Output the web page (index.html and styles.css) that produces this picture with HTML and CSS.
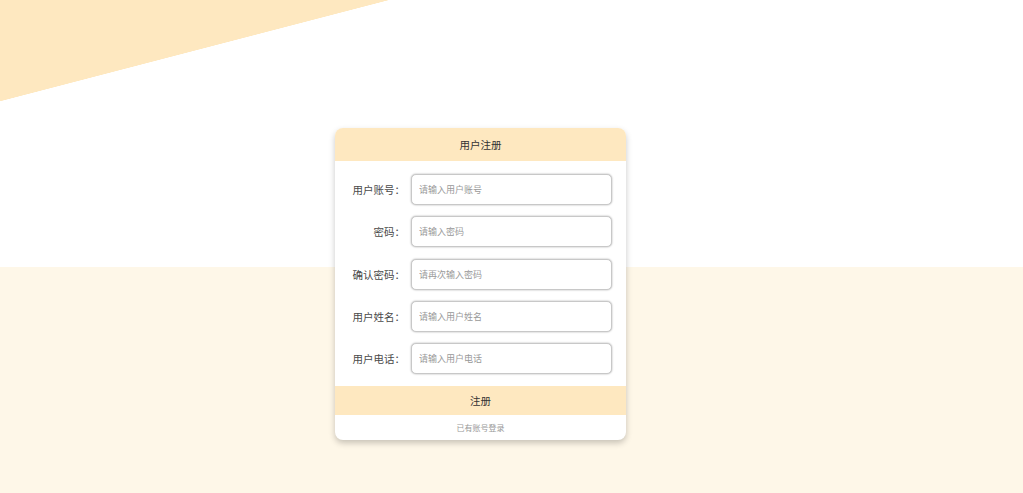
FILE: index.html
```html
<!DOCTYPE html>
<html lang="zh">
<head>
<meta charset="utf-8">
<title>用户注册</title>
<link rel="stylesheet" href="styles.css">
</head>
<body>
<div class="page">
  <div class="card">
    <div class="card-header">用户注册</div>
    <form class="form">
      <div class="row"><label class="label">用户账号：</label><input class="input" type="text" placeholder="请输入用户账号"></div>
      <div class="row"><label class="label">密码：</label><input class="input" type="password" placeholder="请输入密码"></div>
      <div class="row"><label class="label">确认密码：</label><input class="input" type="password" placeholder="请再次输入密码"></div>
      <div class="row"><label class="label">用户姓名：</label><input class="input" type="text" placeholder="请输入用户姓名"></div>
      <div class="row"><label class="label">用户电话：</label><input class="input" type="text" placeholder="请输入用户电话"></div>
    </form>
    <div class="submit">注册</div>
    <div class="login-link">已有账号登录</div>
  </div>
</div>
</body>
</html>
```
FILE: styles.css
```css
html, body {
  margin: 0;
  padding: 0;
}
body {
  width: 1023px;
  height: 493px;
  overflow: hidden;
  font-family: "Noto Sans CJK SC", "Noto Sans", sans-serif;
  color: #444;
  background:
    linear-gradient(to bottom right, #fee8c0 50%, rgba(254,232,192,0) 50.3%) 0 0 / 388px 101px no-repeat,
    linear-gradient(to bottom, #ffffff 267px, #fef7e8 267px);
}
.page {
  padding-top: 128px;
  padding-left: 335px;
}
.card {
  width: 291px;
  background: #fff;
  border-radius: 8px;
  overflow: hidden;
  box-shadow: 0 3px 6px rgba(0,0,0,0.22);
}
.card-header {
  height: 33px;
  line-height: 33px;
  text-align: center;
  background: #fee8c0;
  font-size: 10.5px;
  color: #333;
}
.form {
  padding-top: 13px;
  display: flex;
  flex-direction: column;
  gap: 11.25px;
}
.row {
  display: flex;
  align-items: center;
  height: 31px;
}
.label {
  width: 70px;
  margin-right: 6px;
  text-align: right;
  font-size: 10.5px;
  color: #4a4a4a;
  white-space: nowrap;
}
.input {
  box-sizing: border-box;
  width: 201px;
  height: 31px;
  border: 1px solid #c8c8c8;
  border-radius: 5px;
  box-shadow: 0 0 2px rgba(0,0,0,0.35);
  padding: 0 7px;
  font-family: inherit;
  font-size: 9px;
  color: #333;
  outline: none;
  background: #fff;
}
.input::placeholder {
  color: #999;
}
.submit {
  margin-top: 12px;
  height: 29px;
  line-height: 29px;
  text-align: center;
  background: #fee8c0;
  font-size: 10.5px;
  color: #333;
}
.login-link {
  height: 25px;
  line-height: 25px;
  text-align: center;
  font-size: 8px;
  color: #999;
}
```
